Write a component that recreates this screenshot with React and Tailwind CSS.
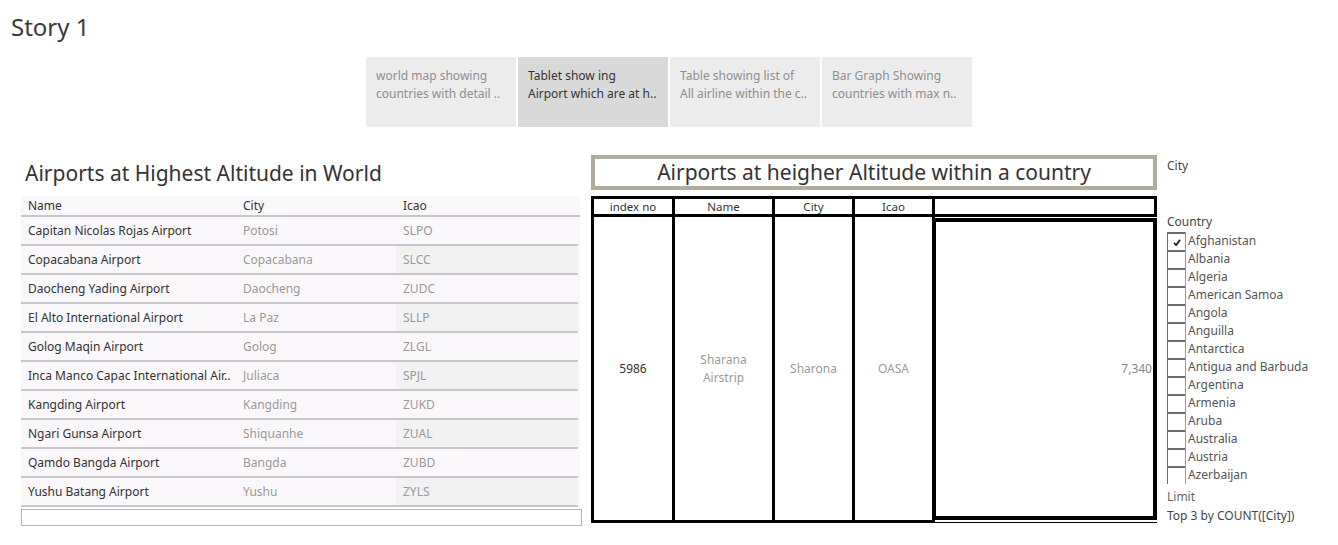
import React from "react";

const tabs = [
  { l1: "world map showing", l2: "countries with detail ..", active: false },
  { l1: "Tablet show ing", l2: "Airport which are at h..", active: true },
  { l1: "Table showing list  of", l2: "All airline within the c..", active: false },
  { l1: "Bar Graph Showing", l2: "countries with max n..", active: false },
];

const airports = [
  ["Capitan Nicolas Rojas Airport", "Potosi", "SLPO"],
  ["Copacabana Airport", "Copacabana", "SLCC"],
  ["Daocheng Yading Airport", "Daocheng", "ZUDC"],
  ["El Alto International Airport", "La Paz", "SLLP"],
  ["Golog Maqin Airport", "Golog", "ZLGL"],
  ["Inca Manco Capac International Air..", "Juliaca", "SPJL"],
  ["Kangding Airport", "Kangding", "ZUKD"],
  ["Ngari Gunsa Airport", "Shiquanhe", "ZUAL"],
  ["Qamdo Bangda Airport", "Bangda", "ZUBD"],
  ["Yushu Batang Airport", "Yushu", "ZYLS"],
];

const countries = [
  "Afghanistan",
  "Albania",
  "Algeria",
  "American Samoa",
  "Angola",
  "Anguilla",
  "Antarctica",
  "Antigua and Barbuda",
  "Argentina",
  "Armenia",
  "Aruba",
  "Australia",
  "Austria",
  "Azerbaijan",
];

export default function App() {
  return (
    <div
      className="w-[1338px] h-[545px] bg-white overflow-hidden text-[#333]"
      style={{ fontFamily: '"Noto Sans", "Liberation Sans", sans-serif' }}
    >
      {/* Story title */}
      <div className="h-[57px] pl-[11px] pt-[10px] text-[24px] leading-[34px] text-[#3a3a3a]">
        Story 1
      </div>

      {/* Story points */}
      <div className="flex justify-center gap-[2px]">
        {tabs.map((t, i) => (
          <div
            key={i}
            className={`w-[150px] h-[70px] pl-[10px] pt-[10px] text-[12px] leading-[18px] whitespace-nowrap ${
              t.active ? "bg-[#d9d9d9] text-[#333]" : "bg-[#ececec] text-[#8f8f8f]"
            }`}
          >
            <div>{t.l1}</div>
            <div>{t.l2}</div>
          </div>
        ))}
      </div>

      {/* Dashboard */}
      <div className="flex mt-[28px]">
        {/* Left table */}
        <div className="ml-[21px] w-[560px]">
          <div className="h-[41px] pl-[4px] pt-[4px] text-[21px] leading-[28px] text-[#333]">
            Airports at Highest Altitude in World
          </div>
          <div className="w-[559px] bg-[#faf7fa]">
            <div className="flex h-[21px] items-center border-b-2 border-[#c8c6c8] text-[12px] text-[#333]">
              <div className="w-[215px] pl-[7px]">Name</div>
              <div className="w-[160px] pl-[7px]">City</div>
              <div className="flex-1 pl-[7px]">Icao</div>
            </div>
            {airports.map((a, i) => (
              <div
                key={i}
                className="flex h-[29px] border-b-2 border-[#c8c6c8] text-[12px] mr-[2px]"
              >
                <div className="w-[215px] pl-[7px] flex items-center text-[#333] whitespace-nowrap overflow-hidden">
                  {a[0]}
                </div>
                <div className="w-[160px] pl-[7px] flex items-center text-[#9a9a9a]">{a[1]}</div>
                <div
                  className={`flex-1 pl-[7px] flex items-center text-[#9a9a9a] ${
                    i % 2 === 1 ? "bg-[#f2f2f2]" : ""
                  }`}
                >
                  {a[2]}
                </div>
              </div>
            ))}
          </div>
          <div className="mt-[2px] h-[17px] w-[561px] border border-[#b5b5b5] bg-white" />
        </div>

        {/* Middle table */}
        <div className="ml-[10px] w-[566px]">
          <div className="h-[35px] border-[4px] border-[#b0ac9e] flex items-center justify-center text-[21px] text-[#333]">
            Airports at heigher Altitude within a country
          </div>
          <div className="mt-[6px] flex h-[21px] text-[11.5px] text-[#333]">
            <div className="w-[81px] border-y-[3px] border-l-[3px] border-black flex items-center justify-center">
              index no
            </div>
            <div className="w-[100px] border-y-[3px] border-l-[3px] border-black flex items-center justify-center">
              Name
            </div>
            <div className="w-[80px] border-y-[3px] border-l-[3px] border-black flex items-center justify-center">
              City
            </div>
            <div className="w-[80px] border-y-[3px] border-l-[3px] border-black flex items-center justify-center">
              Icao
            </div>
            <div className="flex-1 border-[3px] border-black" />
          </div>
          <div className="flex h-[306px] text-[12px]">
            <div className="w-[81px] border-b-[3px] border-l-[3px] border-black flex items-center justify-center text-[#333]">
              5986
            </div>
            <div className="w-[100px] border-b-[3px] border-l-[3px] border-black flex items-center justify-center text-center leading-[18px] text-[#9a9a9a]">
              Sharana
              <br />
              Airstrip
            </div>
            <div className="w-[80px] border-b-[3px] border-l-[3px] border-black flex items-center justify-center text-[#9a9a9a]">
              Sharona
            </div>
            <div className="w-[80px] border-b-[3px] border-l-[3px] border-black flex items-center justify-center text-[#9a9a9a]">
              OASA
            </div>
            <div className="flex-1 border-l-[3px] border-black flex flex-col">
              <div className="flex-1 mt-[1px] border-[4px] border-l-[1px] border-black flex items-center justify-end pr-[1px] text-[#888]">
                7,340
              </div>
              <div className="h-[3px] border-b border-black" />
            </div>
          </div>
        </div>

        {/* Right filters */}
        <div className="ml-[10px] w-[171px] text-[12px]">
          <div className="pt-[2px] leading-[18px] text-[#444]">City</div>
          <div className="mt-[38px] leading-[18px] text-[#444]">Country</div>
          <div className="mt-[1px]">
            {countries.map((c, i) => (
              <div key={c} className="flex h-[18px] items-stretch">
                <div className="w-[18px] border-l border-t-2 border-[#6b6b6b] flex items-center justify-center">
                  {i === 0 && (
                    <svg width="8" height="7" viewBox="0 0 9 8">
                      <path d="M1 4.5 L3.5 7 L8 1" stroke="#222" strokeWidth="2" fill="none" />
                    </svg>
                  )}
                </div>
                <div className="border-l border-[#999] pl-[2px] leading-[18px] text-[#555] whitespace-nowrap">
                  {c}
                </div>
              </div>
            ))}
          </div>
          <div className="mt-[4px] leading-[18px] text-[#666]">Limit</div>
          <div className="mt-[1px] leading-[18px] text-[#444]">Top 3 by COUNT([City])</div>
        </div>
      </div>
    </div>
  );
}
